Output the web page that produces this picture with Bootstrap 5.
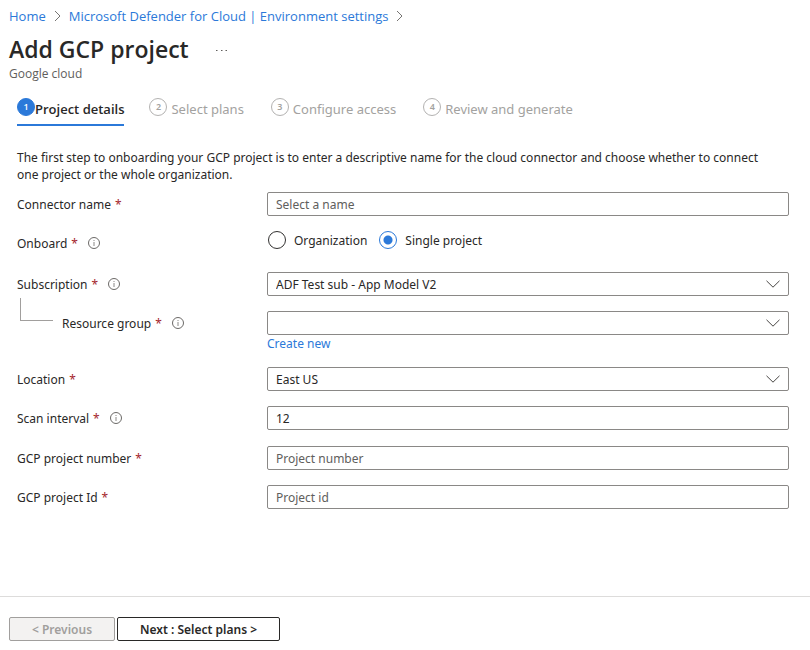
<!DOCTYPE html>
<html lang="en">
<head>
<meta charset="utf-8">
<meta name="viewport" content="width=device-width, initial-scale=1">
<title>Add GCP project</title>
<link href="https://cdn.jsdelivr.net/npm/bootstrap@5.3.0/dist/css/bootstrap.min.css" rel="stylesheet">
<style>
body { font-family: "Noto Sans", "Open Sans", sans-serif; font-size: 12px; line-height: 17px; color: #292827; }
a { color: #2b79d9; text-decoration: none; }
a:hover { text-decoration: underline; }
.page-head { padding: 7px 9px 0; font-family: "Open Sans", "Noto Sans", sans-serif; }
.crumbs { font-size: 13px; line-height: 18px; gap: 8px; }
.page-title { font-size: 23px; line-height: 33px; font-weight: 600; }
.more-btn { color: #605e5c; line-height: 0; margin-left: 27px; }
.subtitle { color: #605e5c; font-size: 12px; line-height: 16px; margin-bottom: 1px; }
.steps { padding: 15px 17px 0; column-gap: 25px; }
.step { font-size: 13px; line-height: 20px; color: #a3a2a0; padding: 0 2px 5px 0; border: 0; border-bottom: 2px solid transparent; background: none; gap: 4px; }
.step.active { font-family: "Open Sans", "Noto Sans", sans-serif; color: #292827; font-weight: 600; border-color: #2b79d9; gap: 0; padding-right: 0; }
.step-no { width: 18px; height: 18px; line-height: 16px; border: 1px solid #b3b2b1; border-radius: 50%; font-size: 9px; font-weight: 600; text-align: center; margin-bottom: 3px; }
.step.active .step-no { background: #2b79d9; border-color: #2b79d9; color: #fff; }
.wizard { padding: 23px 21px 0 17px; }
.intro { margin-bottom: 9px; }
.field-row { margin-bottom: 15px; }
.field-row-choice { margin-bottom: 17px; }
.label-col { width: 250px; height: 24px; flex: none; gap: 4px; }
.req { color: #a4262c; }
.info { margin-left: 6px; flex: none; }
.form-control, .form-select { height: 24px; min-height: 24px; font-size: 12px; line-height: 17px; padding: 2px 8px; border: 1px solid #8a8886; border-radius: 2px; color: #292827; }
.form-control::placeholder { color: #605e5c; opacity: 1; }
.form-select { padding-right: 32px; background-image: url("data:image/svg+xml,%3csvg xmlns='http://www.w3.org/2000/svg' viewBox='0 0 14 8'%3e%3cpath fill='none' stroke='%23484644' d='M.5.8 7 7.2 13.5.8'/%3e%3c/svg%3e"); background-size: 14px 8px; background-position: right 8px center; }
.choices { gap: 12px; height: 18px; padding-left: 1px; }
.choice { gap: 8px; min-height: 0; }
.choice .form-check-input { width: 18px; height: 18px; margin: 0; border-color: #323130; }
.choice .form-check-input:checked { background: radial-gradient(circle, #2b79d9 4px, #fff 5px); border-color: #2b79d9; }
.nested { padding-left: 45px; position: relative; }
.nested::before { content: ""; position: absolute; left: 3px; top: -13px; width: 33px; height: 23px; border: solid #a19f9d; border-width: 0 0 1px 1px; }
.page-foot { border-top: 1px solid #dddcdb; padding: 20px 9px 9px; gap: 2px; }
.page-foot .btn { height: 24px; padding: 0 22px; font-size: 12px; line-height: 17px; font-weight: 600; border-radius: 2px; --bs-btn-disabled-opacity: 1; }
.btn-prev { --bs-btn-disabled-bg: #f3f2f1; --bs-btn-disabled-color: #a19f9d; --bs-btn-disabled-border-color: #a19f9d; }
.btn-next { --bs-btn-color: #292827; --bs-btn-border-color: #292827; }
</style>
<script src="https://cdn.jsdelivr.net/npm/bootstrap@5.3.0/dist/js/bootstrap.bundle.min.js" defer></script>
</head>
<body class="d-flex flex-column min-vh-100 bg-white">
<svg class="d-none" aria-hidden="true">
  <symbol id="i-info" viewBox="0 0 12 12"><circle cx="6" cy="6" r="5.5" fill="none" stroke="#6b6967"/><path d="M6 5v4M6 3v1" stroke="#8a8886" fill="none"/></symbol>
  <symbol id="i-sep" viewBox="0 0 7 12"><path d="M1 1l5 5-5 5" fill="none" stroke="#767472"/></symbol>
</svg>
<header class="page-head">
  <nav class="crumbs d-flex align-items-center" aria-label="Breadcrumb">
    <a href="#">Home</a>
    <svg width="7" height="12"><use href="#i-sep"/></svg>
    <a href="#">Microsoft Defender for Cloud | Environment settings</a>
    <svg width="7" height="12"><use href="#i-sep"/></svg>
  </nav>
  <div class="d-flex align-items-center mt-2">
    <h1 class="page-title mb-0">Add GCP project</h1>
    <button type="button" class="more-btn btn border-0 p-0" aria-label="More actions"><svg width="11" height="1" fill="currentColor"><path d="M0 0h1.500v1H0zM5 0h1.500v1H5zM9.500 0H11v1H9.500z"/></svg></button>
  </div>
  <div class="subtitle">Google cloud</div>
</header>
<nav class="steps d-flex flex-wrap" aria-label="Steps">
  <button type="button" class="step active d-flex align-items-center"><span class="step-no">1</span>Project details</button>
  <button type="button" class="step d-flex align-items-center"><span class="step-no">2</span>Select plans</button>
  <button type="button" class="step d-flex align-items-center"><span class="step-no">3</span>Configure access</button>
  <button type="button" class="step d-flex align-items-center"><span class="step-no">4</span>Review and generate</button>
</nav>
<main class="wizard flex-grow-1">
  <p class="intro pe-4">The first step to onboarding your GCP project is to enter a descriptive name for the cloud connector and choose whether to connect one project or the whole organization.</p>
  <form>
    <div class="field-row d-flex">
      <div class="label-col d-flex align-items-center"><label for="name">Connector name</label><span class="req">*</span></div>
      <input id="name" class="form-control" type="text" placeholder="Select a name">
    </div>
    <div class="field-row field-row-choice d-flex">
      <div class="label-col d-flex align-items-center"><span id="onboard">Onboard</span><span class="req">*</span><svg class="info" width="12" height="12"><use href="#i-info"/></svg></div>
      <div class="choices d-flex" role="radiogroup" aria-labelledby="onboard">
        <div class="choice d-flex align-items-center"><input class="form-check-input" type="radio" name="onboard" id="org"><label for="org">Organization</label></div>
        <div class="choice d-flex align-items-center"><input class="form-check-input" type="radio" name="onboard" id="single" checked><label for="single">Single project</label></div>
      </div>
    </div>
    <div class="field-row d-flex">
      <div class="label-col d-flex align-items-center"><label for="sub">Subscription</label><span class="req">*</span><svg class="info" width="12" height="12"><use href="#i-info"/></svg></div>
      <select id="sub" class="form-select"><option>ADF Test sub - App Model V2</option></select>
    </div>
    <div class="field-row d-flex">
      <div class="label-col nested d-flex align-items-center"><label for="group">Resource group</label><span class="req">*</span><svg class="info" width="12" height="12"><use href="#i-info"/></svg></div>
      <div class="flex-grow-1">
        <select id="group" class="form-select"><option></option></select>
        <a class="d-block" href="#">Create new</a>
      </div>
    </div>
    <div class="field-row d-flex">
      <div class="label-col d-flex align-items-center"><label for="loc">Location</label><span class="req">*</span></div>
      <select id="loc" class="form-select"><option>East US</option></select>
    </div>
    <div class="field-row d-flex mb-3">
      <div class="label-col d-flex align-items-center"><label for="scan">Scan interval</label><span class="req">*</span><svg class="info" width="12" height="12"><use href="#i-info"/></svg></div>
      <input id="scan" class="form-control" type="text" value="12">
    </div>
    <div class="field-row d-flex">
      <div class="label-col d-flex align-items-center"><label for="num">GCP project number</label><span class="req">*</span></div>
      <input id="num" class="form-control" type="text" placeholder="Project number">
    </div>
    <div class="field-row d-flex">
      <div class="label-col d-flex align-items-center"><label for="pid">GCP project Id</label><span class="req">*</span></div>
      <input id="pid" class="form-control" type="text" placeholder="Project id">
    </div>
  </form>
</main>
<footer class="page-foot d-flex">
  <button type="button" class="btn btn-prev" disabled>&lt; Previous</button>
  <button type="button" class="btn btn-next">Next : Select plans &gt;</button>
</footer>
</body>
</html>
